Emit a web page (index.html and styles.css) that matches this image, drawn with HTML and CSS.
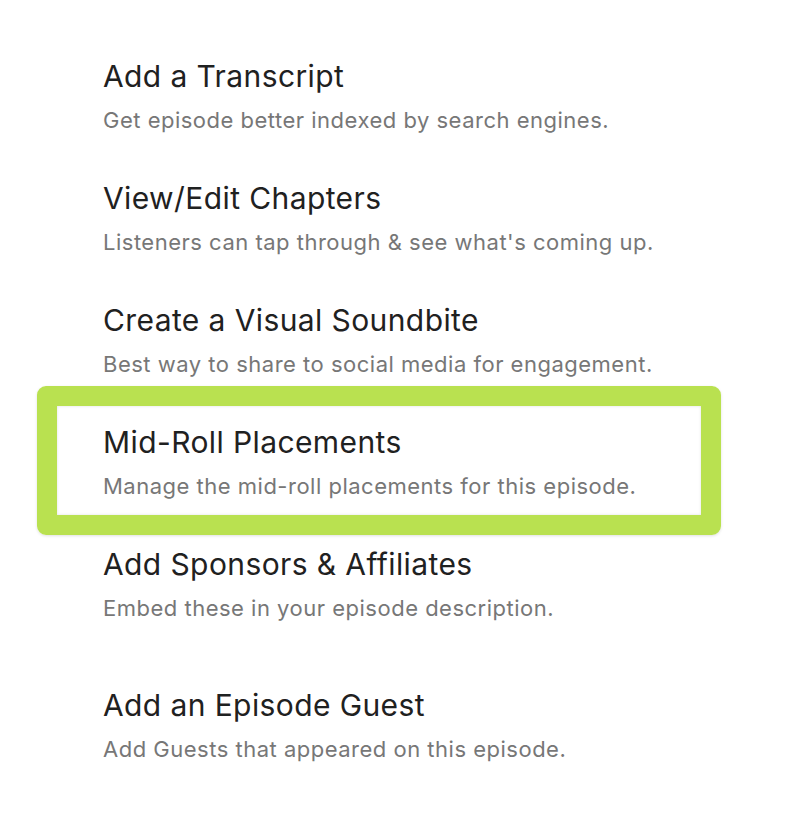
FILE: index.html
```html
<!DOCTYPE html>
<html lang="en">
<head>
<meta charset="utf-8">
<title>Episode tools</title>
<link rel="stylesheet" href="styles.css">
</head>
<body>
<ul class="tools">
  <li class="tool">
    <h3 class="tool-title">Add a Transcript</h3>
    <p class="tool-desc">Get episode better indexed by search engines.</p>
  </li>
  <li class="tool">
    <h3 class="tool-title">View/Edit Chapters</h3>
    <p class="tool-desc">Listeners can tap through &amp; see what's coming up.</p>
  </li>
  <li class="tool">
    <h3 class="tool-title">Create a Visual Soundbite</h3>
    <p class="tool-desc">Best way to share to social media for engagement.</p>
  </li>
  <li class="tool tool-highlight">
    <h3 class="tool-title">Mid-Roll Placements</h3>
    <p class="tool-desc">Manage the mid-roll placements for this episode.</p>
    <span class="highlight-frame"></span>
  </li>
  <li class="tool tool-spaced">
    <h3 class="tool-title">Add Sponsors &amp; Affiliates</h3>
    <p class="tool-desc">Embed these in your episode description.</p>
  </li>
  <li class="tool">
    <h3 class="tool-title">Add an Episode Guest</h3>
    <p class="tool-desc">Add Guests that appeared on this episode.</p>
  </li>
</ul>
</body>
</html>
```

FILE: styles.css
```css
html, body {
  margin: 0;
  padding: 0;
  background: #ffffff;
}

body {
  font-family: Inter, "Noto Sans", "Liberation Sans", sans-serif;
  -webkit-font-smoothing: antialiased;
}

.tools {
  list-style: none;
  margin: 0;
  padding: 58px 0 0 103px;
  display: flex;
  flex-direction: column;
}

.tool {
  position: relative;
  height: 122px;
  display: flex;
  flex-direction: column;
  gap: 12px;
}

.tool-spaced {
  height: 141px;
}

.tool-title {
  margin: 0;
  font-size: 30px;
  line-height: 36px;
  font-weight: 400;
  color: #1f2121;
  letter-spacing: 0.4px;
}

.tool-desc {
  margin: 0;
  font-size: 22px;
  line-height: 28px;
  font-weight: 400;
  color: #777777;
  letter-spacing: 0.5px;
}

.highlight-frame {
  position: absolute;
  left: -66px;
  top: -38px;
  width: 684px;
  height: 149px;
  box-sizing: border-box;
  border: 20px solid #b9e150;
  border-radius: 9px;
  box-shadow: inset 0 0 3px rgba(0, 0, 0, 0.12), 0 1px 3px rgba(0, 0, 0, 0.12);
  pointer-events: none;
}
```
